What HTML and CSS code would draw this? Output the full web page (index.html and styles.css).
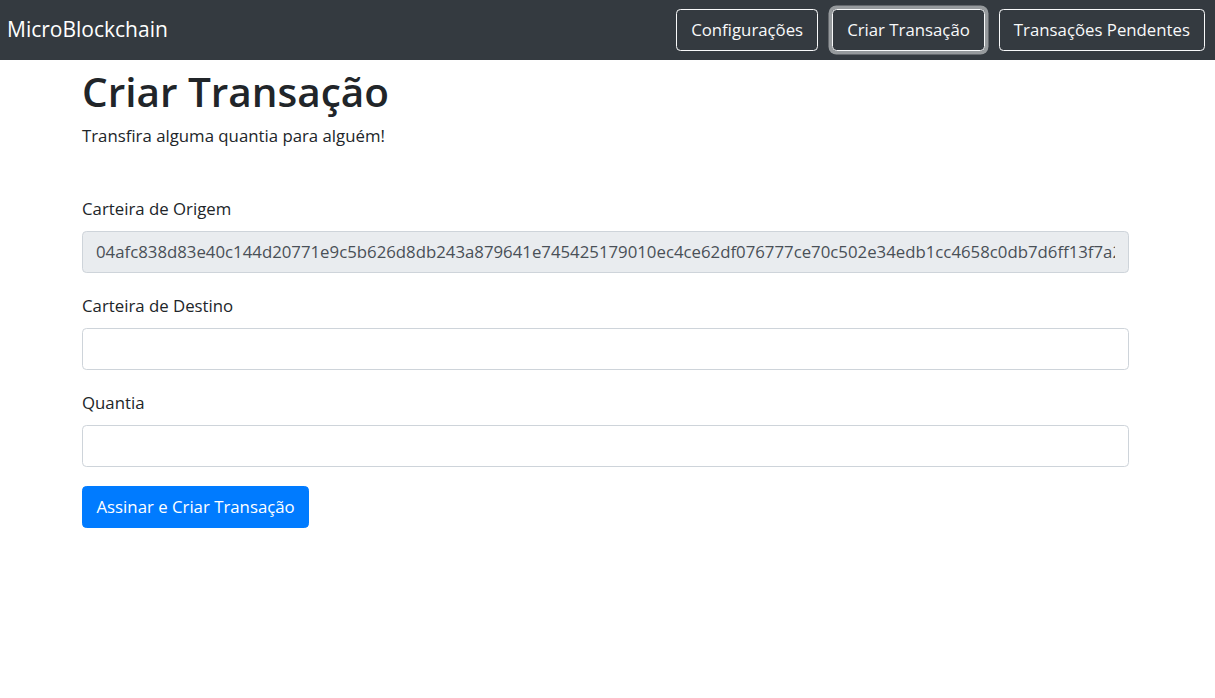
FILE: index.html
```html
<!DOCTYPE html>
<html lang="pt-BR">
<head>
<meta charset="utf-8">
<title>MicroBlockchain</title>
<link rel="stylesheet" href="styles.css">
</head>
<body>
<nav class="navbar">
  <a class="brand" href="#">MicroBlockchain</a>
  <div class="nav-actions">
    <button class="btn btn-outline-light">Configurações</button>
    <button class="btn btn-outline-light focused">Criar Transação</button>
    <button class="btn btn-outline-light">Transações Pendentes</button>
  </div>
</nav>
<main class="container">
  <h1 class="title">Criar Transação</h1>
  <p class="lead-text">Transfira alguma quantia para alguém!</p>
  <form class="tx-form">
    <div class="form-group">
      <label class="form-label">Carteira de Origem</label>
      <input class="form-control" type="text" readonly value="04afc838d83e40c144d20771e9c5b626d8db243a879641e745425179010ec4ce62df076777ce70c502e34edb1cc4658c0db7d6ff13f7a2c9e1">
    </div>
    <div class="form-group">
      <label class="form-label">Carteira de Destino</label>
      <input class="form-control" type="text">
    </div>
    <div class="form-group">
      <label class="form-label">Quantia</label>
      <input class="form-control" type="text">
    </div>
    <button type="button" class="btn btn-primary">Assinar e Criar Transação</button>
  </form>
</main>
</body>
</html>
```
FILE: styles.css
```css
* { box-sizing: border-box; }
html, body { margin: 0; padding: 0; }
body {
  font-family: "Open Sans", "Noto Sans", sans-serif;
  font-size: 16.8px;
  line-height: 1.5;
  color: #212529;
  background: #fff;
}
.navbar {
  height: 60px;
  background: #343a40;
  display: flex;
  align-items: center;
  justify-content: space-between;
  padding: 0 10px 0 7px;
}
.brand {
  color: #fff;
  text-decoration: none;
  font-size: 21px;
  line-height: 1.5;
}
.nav-actions {
  display: flex;
  gap: 14px;
}
.btn {
  font-family: inherit;
  font-size: 16.8px;
  line-height: 1.5;
  height: 42px;
  padding: 0 14px;
  border-radius: 4.4px;
  border: 1px solid transparent;
  cursor: pointer;
  white-space: nowrap;
}
.btn-outline-light {
  color: #f8f9fa;
  background: transparent;
  border-color: #f8f9fa;
}
.btn-outline-light.focused {
  box-shadow: 0 0 0 3.5px rgba(248, 249, 250, 0.5);
}
.btn-primary {
  color: #fff;
  background: #007bff;
  border-color: #007bff;
  padding: 0 13.5px;
}
.container {
  width: 1047px;
  margin-left: 82px;
}
.title {
  font-size: 40.5px;
  font-weight: 600;
  line-height: 1.2;
  margin: 8px 0 6px;
}
.lead-text {
  margin: 0 0 47px;
}
.form-group {
  margin-bottom: 19px;
  display: flex;
  flex-direction: column;
}
.form-label {
  line-height: 27px;
  margin-bottom: 9px;
}
.form-control {
  height: 42px;
  width: 100%;
  padding: 0 13px;
  font-family: inherit;
  font-size: 16.8px;
  color: #495057;
  background: #fff;
  border: 1px solid #ced4da;
  border-radius: 4.4px;
}
.form-control[readonly] {
  background: #e9ecef;
}
```
